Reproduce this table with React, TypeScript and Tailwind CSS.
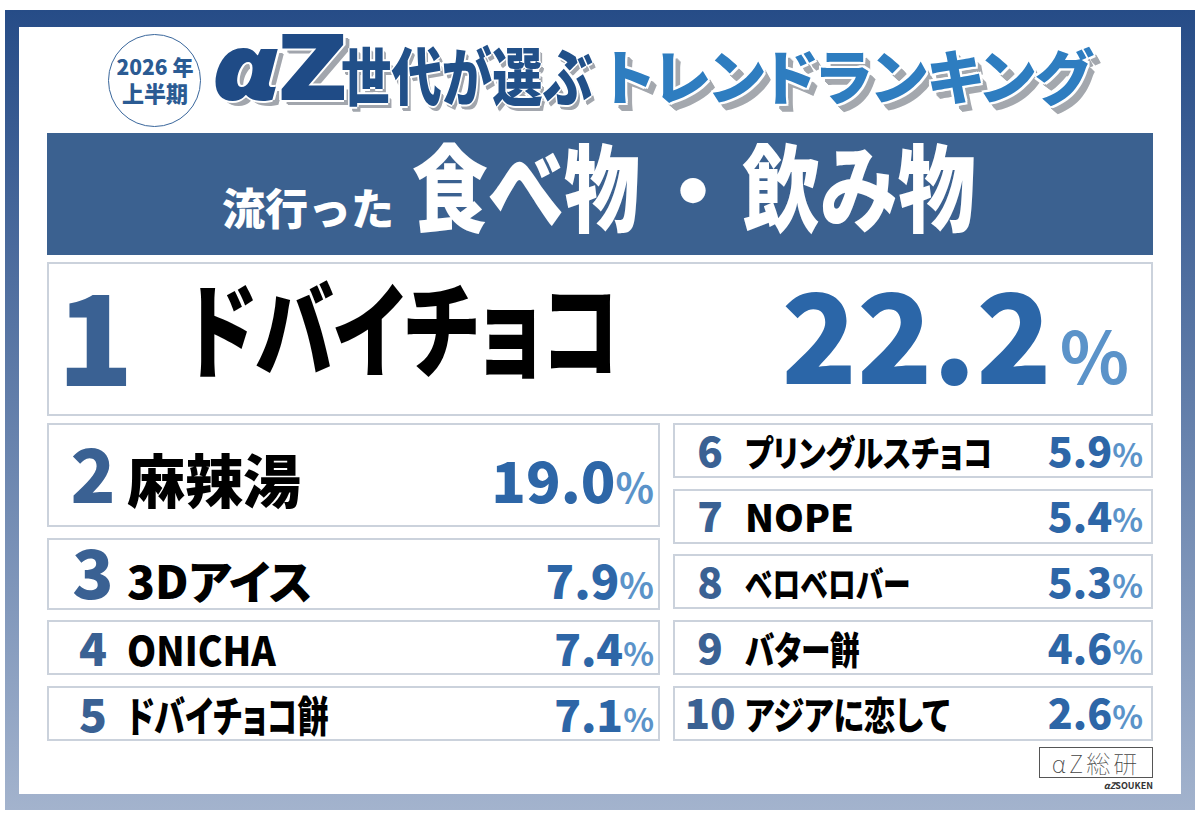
import type { ReactNode } from 'react';

const cjk = "font-['Noto_Sans_CJK_JP',sans-serif]";

// squeezes text horizontally inside a fixed-width slot
function Fit({ w, s, className, children }: { w: string; s: string; className?: string; children: ReactNode }) {
  return (
    <div className={`${w} whitespace-nowrap`}>
      <span className={`inline-block origin-left ${s} ${className ?? ''}`}>{children}</span>
    </div>
  );
}

type RowProps = {
  h: string;
  numW: string;
  numCls: string;
  rank: string;
  nameCls: string;
  name: string;
  pctCls: string;
  signCls: string;
  pct: string;
  pr: string;
};

function Row(p: RowProps) {
  return (
    <div className={`${p.h} border-2 border-[#cbd2dc] bg-white flex items-center ${p.pr}`}>
      <div className="flex items-baseline w-full">
        <span className={`${p.numW} text-center font-black leading-none text-[#3a6193] ${p.numCls}`}>{p.rank}</span>
        <span
          className={`inline-block origin-left font-black leading-none text-black whitespace-nowrap [font-feature-settings:'palt'] ${p.nameCls}`}
        >
          {p.name}
        </span>
        <span className="flex-1" />
        <span className={`font-black leading-none text-[#2d66a7] ${p.pctCls}`}>{p.pct}</span>
        <span className={`font-bold leading-none text-[#5b93c9] ${p.signCls}`}>%</span>
      </div>
    </div>
  );
}

function Title() {
  return (
    <div className="h-[106px] flex items-center justify-center">
      <div className="w-[93px] h-[93px] shrink-0 rounded-full border-[1.5px] border-[#3a679c] flex flex-col items-center justify-center text-[#2b5b93] font-black leading-[1.2]">
        <span className="text-[21px]">2026 年</span>
        <span className="text-[22px]">上半期</span>
      </div>
      <div className="ml-[10px] flex items-baseline mt-[-30px]">
        <Fit
          w="w-[130px]"
          s="scale-x-[1.22]"
          className="font-['Noto_Sans',sans-serif] font-black text-[92px] leading-none tracking-[-4px] text-[#1f4b86] [text-shadow:2px_0_0_#fff,-2px_0_0_#fff,0_2px_0_#fff,0_-2px_0_#fff,4px_4px_0_#a2a6ad,5px_5px_0_#a2a6ad]"
        >
          <span className="italic">α</span>Z
        </Fit>
        <Fit
          w="w-[246px]"
          s="scale-x-[0.8]"
          className="font-black text-[63px] leading-none text-[#215089] [text-shadow:2px_0_0_#fff,-2px_0_0_#fff,0_2px_0_#fff,0_-2px_0_#fff,3px_4px_0_#a2a6ad,4px_5px_0_#a2a6ad]"
        >
          世代が選ぶ
        </Fit>
        <span className="ml-[16px] font-black text-[60px] leading-none text-[#2e7dc0] [font-feature-settings:'palt'] [text-shadow:2px_0_0_#fff,-2px_0_0_#fff,0_2px_0_#fff,0_-2px_0_#fff,2px_2px_0_#fff,-2px_-2px_0_#fff,2px_-2px_0_#fff,-2px_2px_0_#fff,4px_5px_0_#a4a8ae,5px_6px_0_#a4a8ae,6px_7px_0_#a4a8ae,7px_8px_0_#a4a8ae]">
          トレンドランキング
        </span>
      </div>
    </div>
  );
}

function Banner() {
  return (
    <div className="h-[122px] bg-[#3b6190] flex items-center justify-center text-white font-black">
      <div className="flex items-baseline mb-[22px]">
        <span className="text-[43px] leading-none mr-[18px]">流行った</span>
        <Fit w="w-[232px]" s="scale-x-[0.8]" className="text-[95px] leading-none">
          食べ物
        </Fit>
        <span className="w-[98px] text-center text-[90px] leading-none">・</span>
        <Fit w="w-[236px]" s="scale-x-[0.82]" className="text-[95px] leading-none">
          飲み物
        </Fit>
      </div>
    </div>
  );
}

function TopRank() {
  return (
    <div className="mt-[7px] h-[154px] border-2 border-[#cbd2dc] flex items-center pr-[22px]">
      <span className="w-[137px] pl-[8px] mb-[16px] font-black text-[126px] leading-none text-[#3a6193]">1</span>
      <span className="inline-block origin-left scale-x-[0.76] mb-[28px] font-black text-[104px] leading-none text-black whitespace-nowrap [font-feature-settings:'palt']">
        ドバイチョコ
      </span>
      <span className="flex-1" />
      <div className="flex items-baseline mb-[18px]">
        <span className="font-black text-[124px] leading-none text-[#2b66a8]">22.2</span>
        <span className="ml-[8px] font-bold text-[72px] leading-none text-[#5b93c9]">%</span>
      </div>
    </div>
  );
}

const leftNum = 'ml-[10px] w-[68px]';
const rightNum = 'w-[70px]';

export default function App() {
  return (
    <div className={`w-[1200px] h-[815px] bg-white pt-[10px] pl-[5px] ${cjk}`}>
      <div className="w-[1190px] h-[800px] bg-linear-to-b from-[#264c87] to-[#a3b3cd] pt-[17px] px-[14px] pb-[16px]">
        <div className="h-full bg-white px-[28px] flex flex-col">
          <Title />
          <Banner />
          <TopRank />
          <div className="mt-[7px] flex gap-[13px]">
            <div className="w-[613px] flex flex-col gap-[10.7px]">
              <Row h="h-[104px] pb-[8px]" numW={leftNum} numCls="text-[74px]" rank="2" nameCls="text-[58px]" name="麻辣湯" pctCls="text-[57px]" signCls="text-[40px]" pct="19.0" pr="pr-[4px]" />
              <Row h="h-[72px] pb-[7px]" numW={leftNum} numCls="text-[68px]" rank="3" nameCls="text-[46px]" name="3Dアイス" pctCls="text-[47px]" signCls="text-[36px]" pct="7.9" pr="pr-[4px]" />
              <Row h="h-[55px] pb-[4px]" numW={leftNum} numCls="text-[46px]" rank="4" nameCls="text-[40px] scale-x-[0.93]" name="ONICHA" pctCls="text-[44px]" signCls="text-[32px]" pct="7.4" pr="pr-[4px]" />
              <Row h="h-[55px] pb-[4px]" numW={leftNum} numCls="text-[46px]" rank="5" nameCls="text-[42px] scale-x-[0.74]" name="ドバイチョコ餅" pctCls="text-[44px]" signCls="text-[32px]" pct="7.1" pr="pr-[4px]" />
            </div>
            <div className="w-[480px] flex flex-col gap-[10.7px]">
              <Row h="h-[55px] pb-[4px]" numW={rightNum} numCls="text-[42px]" rank="6" nameCls="text-[36px] scale-x-[0.83]" name="プリングルスチョコ" pctCls="text-[41px]" signCls="text-[32px]" pct="5.9" pr="pr-[8px]" />
              <Row h="h-[55px] pb-[4px]" numW={rightNum} numCls="text-[42px]" rank="7" nameCls="text-[38px]" name="NOPE" pctCls="text-[41px]" signCls="text-[32px]" pct="5.4" pr="pr-[8px]" />
              <Row h="h-[55px] pb-[4px]" numW={rightNum} numCls="text-[42px]" rank="8" nameCls="text-[36px] scale-x-[0.77]" name="ベロベロバー" pctCls="text-[41px]" signCls="text-[32px]" pct="5.3" pr="pr-[8px]" />
              <Row h="h-[55px] pb-[4px]" numW={rightNum} numCls="text-[42px]" rank="9" nameCls="text-[38px] scale-x-[0.78]" name="バター餅" pctCls="text-[41px]" signCls="text-[32px]" pct="4.6" pr="pr-[8px]" />
              <Row h="h-[55px] pb-[4px]" numW={rightNum} numCls="text-[42px]" rank="10" nameCls="text-[38px] scale-x-[0.83]" name="アジアに恋して" pctCls="text-[41px]" signCls="text-[32px]" pct="2.6" pr="pr-[8px]" />
            </div>
          </div>
          <div className="self-end mt-[6px] flex flex-col items-end">
            <div className="w-[114px] h-[31px] border border-[#555] flex items-center justify-center text-[#444] font-thin text-[24px] leading-none tracking-[3px]">
              αZ総研
            </div>
            <div className="mt-[3px] text-[9px] font-bold leading-none text-[#333]">
              <span className="italic">αZ</span>SOUKEN
            </div>
          </div>
        </div>
      </div>
    </div>
  );
}
